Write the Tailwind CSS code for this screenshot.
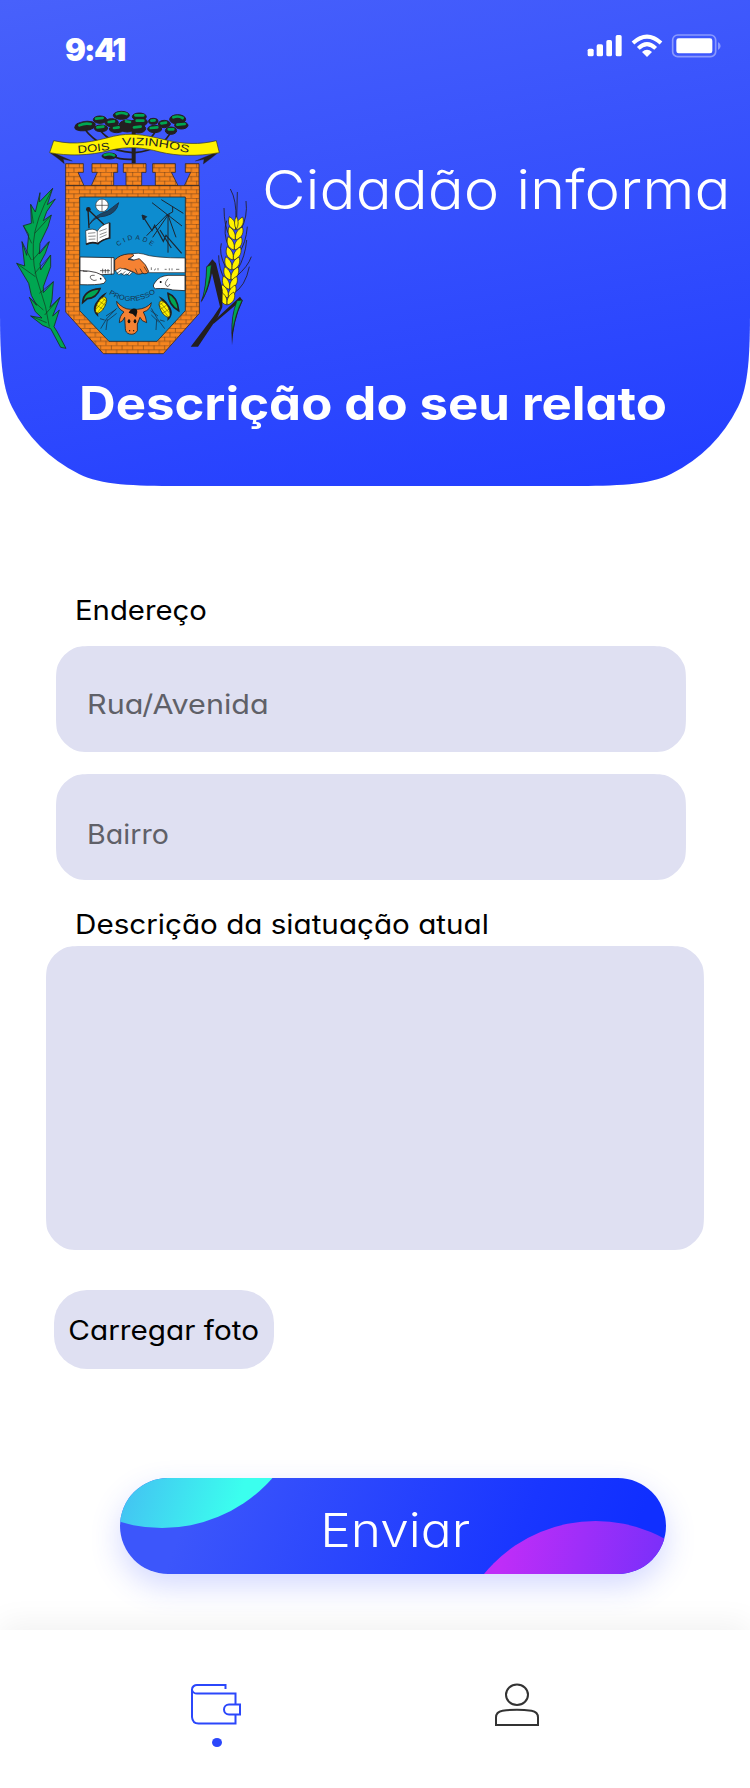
<!DOCTYPE html>
<html lang="pt-BR">
<head>
<meta charset="utf-8">
<title>Cidadão informa</title>
<script src="https://cdn.jsdelivr.net/npm/@tailwindcss/browser@4"></script>
</head>
<body class="bg-white">
<div class="w-[750px] h-[1788px] overflow-hidden flex flex-col bg-white font-['Inter','Open_Sans',sans-serif] [font-feature-settings:'cv11'] whitespace-nowrap">

  <header class="relative h-[486px] shrink-0 text-white bg-[linear-gradient(169deg,#4861fb_0%,#213dff_100%)] [clip-path:path('M0_0H750V308C750_352_749_385_738_407A150_150_0_0_1_671_474C649_485_616_486_572_486H178C134_486_101_485_79_474A150_150_0_0_1_12_407C1_385_0_352_0_308Z')]">
    <div class="flex items-center justify-between h-[98px] pl-[65px] pr-[29px]">
      <div class="mt-[2px] text-[31px] leading-[40px] font-black tracking-[-1.8px]">9:41</div>
      <svg class="w-[134px] h-[60px] mt-[2px]" viewBox="52 0 402 180" fill="#fff">
        <rect x="54" y="86" width="18" height="23" rx="5"/><rect x="81" y="73" width="19" height="36" rx="5"/><rect x="110" y="60" width="17" height="49" rx="5"/><rect x="138" y="45" width="18" height="64" rx="5"/>
        <g fill="none" stroke="#fff" stroke-width="12"><path d="M190 69Q232 31 274 69"/><path d="M206 85Q232 60 258 85"/></g>
        <path d="M217 96Q232 83 247 96L232 111Z"/>
        <rect x="309" y="45" width="129" height="65" rx="15" fill="none" stroke="#fff" stroke-opacity=".4" stroke-width="5"/>
        <rect x="320" y="55" width="108" height="45" rx="7"/>
        <path d="M445 66Q453 70 453 78T445 90Z" fill-opacity=".4"/>
      </svg>
    </div>
    <div class="flex">
      <svg class="w-[260px] h-[262px] mt-[2px] shrink-0" viewBox="0 0 780 786">
        <defs>
          <pattern id="brick" width="32" height="26" patternUnits="userSpaceOnUse" x="4" y="8">
            <rect width="32" height="26" fill="#f6851f"/>
            <path d="M0 .8H32M0 13.8H32M10 0V13M26 13V26" stroke="#5a3418" stroke-width="1.5" fill="none"/>
          </pattern>
          <path id="cidadeText" d="M355 440Q402 398 458 440"/>
          <path id="progText" d="M326 582Q396 626 468 578"/>
          <path id="viz" d="M366 136Q462 130 568 160"/>
          <g id="corn"><path d="M-8 36Q-34 14-10-14Q2-32 18-38Q-16 0-8 36Z" fill="#231f20"/><ellipse rx="12" ry="27" fill="#fff200" stroke="#231f20" stroke-width="2" transform="rotate(28)"/><path d="M-17 15L14-20M-10 22L18-14M-14 0L8 14M-6-12L14 2M2-22L18-10" stroke="#5a5000" stroke-width="1.5"/></g>
          <g id="grain" fill="#fff200" stroke="#231f20" stroke-width="2"><path d="M0 2C-20-4-24-20-18-38C-4-30 4-16 0 2Z"/><path d="M2 2C22-4 28-22 22-37C8-30-2-16 2 2Z"/></g>
        </defs>

        <!-- araucaria tree -->
        <g fill="none" stroke="#231f20" stroke-width="5"><path d="M401 60V190" stroke-width="12"/><path d="M398 158Q300 150 252 85M401 140Q330 130 300 90M404 158Q490 150 515 90M404 140Q460 120 470 85M398 178Q360 180 338 168"/></g>
        <g fill="#231f20" stroke="#231f20" stroke-width="3"><ellipse cx="255" cy="78" rx="31" ry="14" transform="rotate(-8 255 78)"/><ellipse cx="300" cy="59" rx="20" ry="11"/><ellipse cx="364" cy="46" rx="24" ry="12"/><ellipse cx="418" cy="50" rx="21" ry="11"/><ellipse cx="335" cy="68" rx="20" ry="12"/><ellipse cx="303" cy="85" rx="20" ry="10"/><ellipse cx="350" cy="87" rx="22" ry="11"/><ellipse cx="382" cy="78" rx="26" ry="18"/><ellipse cx="420" cy="66" rx="22" ry="13"/><ellipse cx="415" cy="86" rx="22" ry="13"/><ellipse cx="460" cy="64" rx="14" ry="9"/><ellipse cx="464" cy="87" rx="21" ry="11"/><ellipse cx="493" cy="72" rx="18" ry="11"/><ellipse cx="533" cy="58" rx="24" ry="14"/><ellipse cx="544" cy="76" rx="20" ry="11"/><ellipse cx="513" cy="92" rx="17" ry="11"/><ellipse cx="328" cy="168" rx="22" ry="9"/></g>
        <g fill="none" stroke="#00a651" stroke-width="8" stroke-linecap="round"><path d="M238 76Q255 68 272 72M288 56L308 54M350 42Q364 36 380 42M406 46L430 46M326 66L342 64M292 82L310 80M342 84L356 82M378 64L390 66M410 62L430 62M402 82L422 80M454 62L464 61M452 84L472 82M484 70L498 68M520 52Q535 46 548 54M532 74L554 72M506 88L520 88M314 165Q330 160 342 166"/></g>
        <!-- ribbon -->
        <path d="M160 158L217 183L190 178L193 191Q170 172 152 160ZM645 158L586 183L612 178L610 192Q634 175 652 160Z" fill="#231f20" stroke="#231f20"/>
        <path d="M161 122C230 138 280 124 340 109C390 97 430 104 485 117C550 134 600 134 649 122L658 158C590 170 530 168 480 156C430 142 380 138 330 151C270 168 200 168 149 158Z" fill="#fff200" stroke="#3b3a10" stroke-width="2"/>
        <g fill="#231f20" font-family="Liberation Sans, sans-serif">
          <text font-size="32" transform="rotate(-6 232 160)" x="234" y="160" textLength="96" lengthAdjust="spacingAndGlyphs">DOIS</text>
          <text font-size="32"><textPath href="#viz" textLength="202" lengthAdjust="spacingAndGlyphs">VIZINHOS</textPath></text>
        </g>

        <!-- castle wall and shield -->
        <g fill="url(#brick)" stroke="#3a2a22" stroke-width="2.5">
          <path d="M197 191H250V217H234L252 257H197Z"/><path d="M276 191H353V217H341V257H274L292 217H276Z"/><path d="M370 191H438V217H425V257H378V217H370Z"/><path d="M458 191H526V217H514L534 257H466V217H458Z"/><path d="M556 191H597V257H553L572 217H556Z"/>
          <path d="M197 257H598V640L490 761H310L197 636Z"/>
        </g>
        <path d="M239 291H556V632L471 724H327L239 632Z" fill="#0d8ccf" stroke="#2b2b2b" stroke-width="2.5"/>
        <!-- sun, compass, quill, book -->
        <path d="M268 374Q284 350 316 348Q350 340 356 308Q338 322 322 334Q284 344 268 374Z" fill="#1c4565" stroke="#1d3550" stroke-width="3"/>
        <circle cx="306" cy="316" r="19" fill="#fff" stroke="#333" stroke-width="2"/><path d="M306 297V335M287 316H325" stroke="#333" stroke-width="2"/>
        <path d="M264 328L267 385M264 328L320 382" stroke="#231f20" stroke-width="4"/><circle cx="265" cy="328" r="7" fill="#231f20"/>
        <path d="M257 392Q280 382 292 394Q300 376 328 368V414Q306 418 294 430Q274 424 259 434Z" fill="#fff" stroke="#231f20" stroke-width="2"/>
        <path d="M258 433Q276 424 294 431Q308 418 329 414V368" fill="none" stroke="#231f20" stroke-width="5"/>
        <path d="M264 400L286 398M265 409L287 408M266 418L286 417M298 394L320 386M299 404L320 396M299 413L320 404M292 394V428" stroke="#555" stroke-width="2"/>
        <!-- antenna and lightning -->
        <g stroke="#1c2733" stroke-width="3" fill="none"><path d="M504 345V458M456 308L546 378M484 299L550 340M440 407L500 345L518 336V320M458 412L504 345L528 412M498 345H510"/><path d="M428 348L456 392L464 376L490 424L498 406L545 460M480 390L514 444" stroke-width="3.500"/><path d="M426 345L440 350L430 360Z" fill="#1c2733"/></g>
        <text font-size="20" fill="#17324a" font-family="Liberation Sans, sans-serif"><textPath href="#cidadeText" textLength="112">CIDADE</textPath></text>
        <!-- handshake -->
        <path d="M240 471L342 473V522L240 528Z" fill="#fff" stroke="#231f20" stroke-width="2.5"/>
        <path d="M240 512Q300 512 314 534Q322 542 312 550Q290 556 240 554Z" fill="#fff" stroke="#231f20" stroke-width="2.5"/>
        <path d="M334 473V525M250 511V514H262M300 512H330M308 506V520M316 507V520M324 507V520M284 526Q264 524 274 538Q282 544 290 540" stroke="#231f20" stroke-width="2" fill="none"/>
        <path d="M380 470Q400 455 430 462Q460 474 555 474V518H446L430 495Z" fill="#fff" stroke="#231f20" stroke-width="2"/>
        <path d="M344 480Q360 464 384 462Q404 460 400 468L384 478Q400 484 418 476Q440 494 446 514Q442 524 428 520Q412 526 404 518L376 506L344 513Z" fill="#f58233" stroke="#231f20" stroke-width="2.5"/>
        <path d="M346 512L360 504L376 508L398 516L388 526L380 522L372 526L364 520L356 524Z" fill="#fff" stroke="#231f20" stroke-width="2"/>
        <path d="M350 521L364 510M364 526L376 514M380 526L392 514M412 520L406 506M428 520L420 506M442 516L432 500" stroke="#231f20" stroke-width="2"/>
        <path d="M454 510V502M462 511L468 506M474 511V504M494 508H500M508 505V511M516 505V511M528 508H538" stroke="#333" stroke-width="2"/>
        <path d="M555 526H504Q478 528 466 546Q454 560 466 566Q500 564 518 570L555 572Z" fill="#fff" stroke="#231f20" stroke-width="2.5"/>
        <path d="M504 536Q488 554 504 560L510 552" fill="none" stroke="#231f20" stroke-width="2"/><circle cx="482" cy="546" r="3"/><circle cx="302" cy="536" r="2.5"/>
        <text font-size="21" fill="#17324a" font-family="Liberation Sans, sans-serif"><textPath href="#progText" textLength="150" lengthAdjust="spacingAndGlyphs">PROGRESSO</textPath></text>
        <!-- corn and wheat -->
        <path d="M248 608Q250 570 300 566Q290 594 262 596Z" fill="#00a651" stroke="#231f20" stroke-width="5"/><path d="M504 580Q532 590 536 632Q506 616 504 580Z" fill="#00a651" stroke="#231f20" stroke-width="5"/>
        <use href="#corn" x="303" y="615"/><g transform="translate(494 627) scale(-1 1)"><use href="#corn"/></g>
        <g stroke="#19364d" stroke-width="2.5" fill="none"><path d="M302 686L320 656L350 625M318 690L322 658M318 648L348 628M322 662L350 640M314 660L300 656"/><path d="M494 686L472 656L454 625M468 690L470 658M474 648L452 632M476 666L454 645M480 660L494 664"/></g>
        <!-- ox head -->
        <path d="M372 636Q350 624 350 604Q368 628 392 628H412Q440 626 454 608Q452 630 430 636Q438 650 440 668Q424 664 420 652L412 672V692Q404 706 388 702Q376 698 376 686L374 652Q370 664 358 668Q358 648 372 636Z" fill="#f58233" stroke="#231f20" stroke-width="2.5"/>
        <path d="M386 638Q388 630 398 626Q412 624 412 636L408 652L398 642Q392 640 386 638Z" fill="#111"/>
        <ellipse cx="387" cy="664" rx="4" ry="6" fill="#111"/><ellipse cx="405" cy="664" rx="4" ry="6" fill="#111"/><path d="M389 694V690M401 694V690" stroke="#111" stroke-width="3"/>

        <!-- coffee branch -->
        <path d="M158 265L118 306L120 278L106 336L92 313L94 370L70 377L86 404L80 466L66 425L74 498L50 490L86 550L94 586L110 616L88 592L106 635L126 654L92 648L128 676L152 686L182 742L198 745L172 696L162 680L178 630L158 648L180 592L150 622L156 598L160 545L130 578L130 560L152 500L152 465L122 510L120 490L136 460L148 425L118 462L120 430L144 380L154 345L130 362L140 335L166 297L142 314Z" fill="#00a651" stroke="#17331f" stroke-width="2.5" stroke-linejoin="round"/>
        <path d="M158 265Q104 360 100 430T118 560T148 680M92 313L100 370M70 377L95 430M66 425L94 480M50 490L106 530M88 592L130 630M92 648L140 668M154 345L104 400M146 425L98 480M152 465L104 520M160 545L118 580M180 592L134 645" fill="none" stroke="#17331f" stroke-width="2"/>

        <!-- wheat stalk -->
        <g fill="none" stroke="#231f20" stroke-width="2.5"><path d="M691 267Q710 300 708 360M712 276L710 360M738 303Q744 350 722 390M672 324Q672 380 690 410M680 362Q668 400 686 440M742 380Q738 430 716 460M664 430Q656 460 676 500M754 470Q744 500 708 530M656 466Q656 510 676 540M740 420Q736 470 712 510M748 500Q736 560 700 580"/></g>
        <use href="#grain" x="706" y="388"/><use href="#grain" x="705" y="418"/><use href="#grain" x="702" y="448"/><use href="#grain" x="699" y="478"/><use href="#grain" x="695" y="508"/><use href="#grain" x="692" y="538"/><use href="#grain" x="688" y="566"/><use href="#grain" x="684" y="592"/><use href="#grain" x="680" y="613"/><path d="M709 348Q720 370 709 388Q698 370 709 348Z" fill="#fff200" stroke="#231f20" stroke-width="2"/>
        <path d="M602 610Q616 580 620 500L637 478L648 490L668 570L667 622L654 650L594 740L572 740L640 650L660 620L636 520Q626 575 602 610Z" fill="#231f20"/>
        <path d="M604 604Q618 570 620 500L634 494Q630 560 604 604Z" fill="#00a651" stroke="#231f20" stroke-width="2"/>
        <path d="M640 664L720 590L728 602Q700 660 696 736Q690 660 708 614L640 672Z" fill="#231f20"/>
        <path d="M711 602L727 600Q706 640 697 700Q692 650 711 602Z" fill="#00a651" stroke="#231f20" stroke-width="2"/>
      </svg>
      <h1 class="mt-[60px] ml-[2px] text-[54px] leading-[64px] font-light origin-left scale-x-[1.109]">Cidadão informa</h1>
    </div>
    <h2 class="mt-[11px] ml-[79px] w-fit text-[46px] leading-[60px] font-bold origin-left scale-x-[1.105]">Descrição do seu relato</h2>
  </header>

  <main class="h-[1144px] shrink-0 flex flex-col items-start text-[27px] leading-[32px] text-black">
    <label class="mt-[109px] ml-[75px] origin-left scale-x-[1.085]">Endereço</label>
    <div class="mt-[19px] ml-[56px] w-[630px] h-[106px] pl-[31px] pt-[43px] bg-[#dfe0f2] text-[#5f6068] [clip-path:path('M0_39C0_29_0_22_2.6_17.4A33_33_0_0_1_17.4_2.6C22_0_29_0_39_0H591C601_0_608_0_612.6_2.6A33_33_0_0_1_627.4_17.4C630_22_630_29_630_39V67C630_77_630_84_627.4_88.6A33_33_0_0_1_612.6_103.4C608_106_601_106_591_106H39C29_106_22_106_17.4_103.4A33_33_0_0_1_2.6_88.6C0_84_0_77_0_67Z')]"><span class="inline-block origin-left scale-x-[1.13]">Rua/Avenida</span></div>
    <div class="mt-[22px] ml-[56px] w-[630px] h-[106px] pl-[31px] pt-[45px] bg-[#dfe0f2] text-[#5f6068] [clip-path:path('M0_39C0_29_0_22_2.6_17.4A33_33_0_0_1_17.4_2.6C22_0_29_0_39_0H591C601_0_608_0_612.6_2.6A33_33_0_0_1_627.4_17.4C630_22_630_29_630_39V67C630_77_630_84_627.4_88.6A33_33_0_0_1_612.6_103.4C608_106_601_106_591_106H39C29_106_22_106_17.4_103.4A33_33_0_0_1_2.6_88.6C0_84_0_77_0_67Z')]"><span class="inline-block origin-left scale-x-[1.06]">Bairro</span></div>
    <label class="mt-[29px] ml-[75px] origin-left scale-x-[1.097]">Descrição da siatuação atual</label>
    <div class="mt-[5px] ml-[46px] w-[658px] h-[304px] bg-[#dfe0f2] [clip-path:path('M0_39C0_29_0_22_2.6_17.4A33_33_0_0_1_17.4_2.6C22_0_29_0_39_0H619C629_0_636_0_640.6_2.6A33_33_0_0_1_655.4_17.4C658_22_658_29_658_39V265C658_275_658_282_655.4_286.6A33_33_0_0_1_640.6_301.4C636_304_629_304_619_304H39C29_304_22_304_17.4_301.4A33_33_0_0_1_2.6_286.6C0_282_0_275_0_265Z')]"></div>
    <button class="mt-[40px] ml-[54px] w-[220px] h-[79px] pt-[2px] flex items-center justify-center bg-[#dfe0f2] rounded-[33px]"><span class="scale-x-[1.1]">Carregar foto</span></button>
    <button class="relative mt-[109px] ml-[120px] w-[546px] h-[96px] rounded-full shadow-[0_12px_30px_rgba(60,80,255,0.22)]">
      <svg class="absolute inset-0 size-full" viewBox="0 0 546 96">
        <defs>
          <clipPath id="pill"><rect width="546" height="96" rx="48"/></clipPath>
          <linearGradient id="blue" gradientUnits="userSpaceOnUse" x1="80" y1="0" x2="480" y2="150"><stop stop-color="#3c56fb"/><stop offset=".75" stop-color="#1936ff"/><stop offset="1" stop-color="#102fff"/></linearGradient>
          <linearGradient id="cyan" gradientUnits="userSpaceOnUse" x1="5" y1="10" x2="112" y2="45"><stop stop-color="#43c3f2"/><stop offset="1" stop-color="#3bffee"/></linearGradient>
          <linearGradient id="purple" gradientUnits="userSpaceOnUse" x1="385" y1="60" x2="535" y2="90"><stop stop-color="#bf2df8"/><stop offset="1" stop-color="#7d2ffa"/></linearGradient>
        </defs>
        <g clip-path="url(#pill)"><rect width="546" height="96" fill="url(#blue)"/><circle cx="42" cy="-97" r="147" fill="url(#cyan)"/><circle cx="475.6" cy="187" r="144" fill="url(#purple)"/></g>
      </svg>
      <span class="relative block pl-[4px] pt-[7px] text-[47px] leading-[88px] font-light text-white scale-x-[1.093]">Enviar</span>
    </button>
  </main>

  <nav class="relative grow bg-white shadow-[0_-6px_30px_rgba(0,0,0,0.06)]">
    <div class="flex h-full">
      <div class="w-[432px] pl-[190px] pt-[53px] flex flex-col">
        <svg class="w-[52px] h-[42px]" viewBox="0 0 52 42" fill="none" stroke="#2b47fb" stroke-width="2"><path d="M35.500 6V2H7.500A5 4.500 0 0 0 2 6.500V34Q2.500 40.500 8.500 40.500H45.500V31.500M45.500 21V10.500H7.500A5 4.500 0 0 1 2 6.500M50 21.500V31.500H39A5 5 0 0 1 39 21.500Z"/></svg>
        <div class="mt-[13px] ml-[22px] w-[10px] h-[9px] rounded-[50%] bg-[#2b47fb]"></div>
      </div>
      <svg class="w-[46px] h-[44px] mt-[53px] ml-[62px]" viewBox="0 0 46 44" fill="none" stroke="#333" stroke-width="2"><ellipse cx="23" cy="11.700" rx="11" ry="10.300"/><path d="M2 42V34.500Q2 29 8.500 27.800Q23 25.500 37.500 27.800Q44 29 44 34.500V42Z"/></svg>
    </div>
  </nav>
</div>
</body>
</html>
